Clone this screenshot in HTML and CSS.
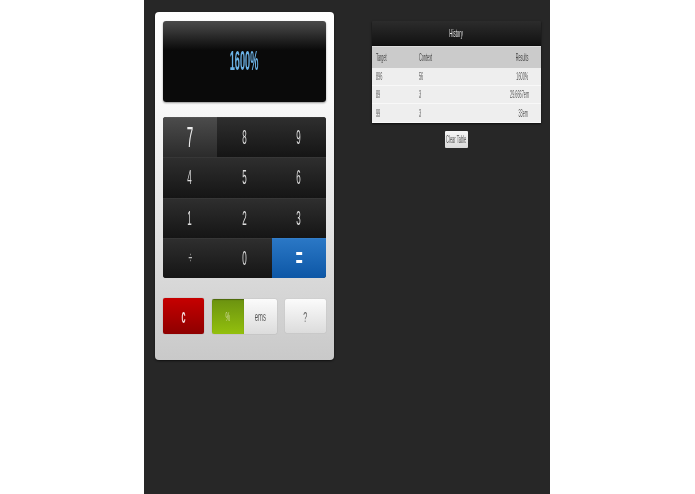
FILE: index.html
```html
<!DOCTYPE html>
<html lang="en">
<head>
<meta charset="utf-8">
<title>Pixel to Em Calculator</title>
<link rel="stylesheet" href="styles.css">
</head>
<body>
<div class="page">
  <section class="calc">
    <div class="display"><span class="sq display-text">1600%</span></div>
    <div class="keypad">
      <button class="key key-hover"><span class="sq big">7</span></button>
      <button class="key"><span class="sq">8</span></button>
      <button class="key"><span class="sq">9</span></button>
      <button class="key"><span class="sq">4</span></button>
      <button class="key"><span class="sq">5</span></button>
      <button class="key"><span class="sq">6</span></button>
      <button class="key"><span class="sq">1</span></button>
      <button class="key"><span class="sq">2</span></button>
      <button class="key"><span class="sq">3</span></button>
      <button class="key"><span class="sq div">÷</span></button>
      <button class="key"><span class="sq">0</span></button>
      <button class="key key-eq"><span class="sq eq">=</span></button>
    </div>
    <div class="controls">
      <button class="ctl clear"><span class="sq">c</span></button>
      <div class="toggle">
        <span class="tog tog-on"><span class="sq">%</span></span>
        <span class="tog tog-off"><span class="sq">ems</span></span>
      </div>
      <button class="ctl help"><span class="sq">?</span></button>
    </div>
  </section>
  <section class="history">
    <div class="hist-card">
      <div class="hist-title"><span class="sq">History</span></div>
      <table class="hist-table">
        <thead>
          <tr><th><span class="sq sl">Target</span></th><th><span class="sq sl">Context</span></th><th class="r"><span class="sq sr">Results</span></th></tr>
        </thead>
        <tbody>
          <tr><td><span class="sq sl">896</span></td><td><span class="sq sl">56</span></td><td class="r"><span class="sq sr">1600%</span></td></tr>
          <tr><td><span class="sq sl">89</span></td><td><span class="sq sl">3</span></td><td class="r"><span class="sq sr">29.6667em</span></td></tr>
          <tr><td><span class="sq sl">99</span></td><td><span class="sq sl">3</span></td><td class="r"><span class="sq sr">33em</span></td></tr>
        </tbody>
      </table>
    </div>
    <button class="clear-table"><span class="sq">Clear Table</span></button>
  </section>
</div>
</body>
</html>
```
FILE: styles.css
```css
html, body { margin: 0; padding: 0; background: #fff; height: 100%; overflow: hidden; }
body { font-family: "Liberation Sans", Arial, sans-serif; }
button { font-family: inherit; border: 0; padding: 0; margin: 0; }
.page {
  box-sizing: border-box;
  width: 406px; height: 494px; margin-left: 144px;
  background: #272727;
  display: flex; align-items: flex-start;
  padding: 12px 9px 0 11px;
  gap: 38px;
}
.sq { display: inline-block; transform: scaleX(.4); transform-origin: center; white-space: nowrap; filter: blur(.3px); }
.sl { transform-origin: left center; transform: scaleX(.38); }
.sr { transform-origin: right center; transform: scaleX(.38); }

.calc {
  box-sizing: border-box; width: 179px; height: 348px; flex: none;
  border-radius: 4px;
  background: linear-gradient(#fff 0, #f8f8f8 25%, #e4e4e4 60%, #c9c9c9 100%);
  padding: 9px 8px 0;
  box-shadow: 0 1px 2px rgba(0,0,0,.6);
}
.display {
  height: 81px; border-radius: 3px;
  background: linear-gradient(#4a4a4a 0, #3a3a3a 10%, #1c1c1c 26%, #0a0a0a 36%, #0a0a0a 100%);
  display: flex; align-items: center; justify-content: center;
  box-shadow: 0 1px 2px rgba(0,0,0,.4);
}
.display-text { color: #6cb2e6; font-size: 27px; transform: scaleX(.34); font-weight: bold; }
.keypad {
  margin-top: 15px; height: 161px; border-radius: 3px; overflow: hidden;
  display: grid; grid-template-columns: 54px 55px 54px; grid-template-rows: 40px 41px 40px 40px;
  background: #1b1b1b;
}
.key {
  background: linear-gradient(#2f2f2f, #151515);
  color: #ddd; font-size: 20px;
  display: flex; align-items: center; justify-content: center;
  box-shadow: inset 0 1px 0 rgba(255,255,255,.04);
}
.key-hover { background: linear-gradient(#4c4c4c, #2b2b2b); color: #eee; }
.big { font-size: 29px; transform: scaleX(.4); }
.div { font-size: 16px; color: #bbb; transform: scaleX(.42); }
.key-eq { background: linear-gradient(#2b78c6, #0d57a6); color: #fff; font-weight: bold; }
.eq { font-size: 28px; transform: scaleX(.42); }

.controls { display: flex; align-items: center; margin-top: 20px; justify-content: space-between; }
.ctl { height: 35px; width: 41px; border-radius: 2px; font-size: 15px; display: flex; align-items: center; justify-content: center; }
.clear { background: linear-gradient(#c60000, #8e0000); color: #f3dada; font-weight: bold; height: 36px; box-shadow: 0 0 1px rgba(0,0,0,.4); }
.clear .sq { font-size: 20px; transform: scaleX(.36); }
.help { background: linear-gradient(#fbfbfb, #dcdcdc); color: #666; box-shadow: 0 0 1px rgba(0,0,0,.25); height: 34px; }
.help .sq { transform: scaleX(.48); }
.toggle { display: flex; width: 65px; height: 35px; border-radius: 2px; overflow: hidden; box-shadow: 0 0 1px rgba(0,0,0,.35); }
.tog { display: flex; align-items: center; justify-content: center; font-size: 13px; }
.tog-on { width: 32px; background: linear-gradient(#6b9210, #93c00d); color: #d6dca8; box-shadow: inset 0 1px 1px rgba(0,0,0,.3); }
.tog-off { flex: 1; background: linear-gradient(#fbfbfb, #dcdcdc); color: #555; }
.tog-off .sq { transform: scaleX(.45); }

.history { flex: 1; display: flex; flex-direction: column; align-items: center; padding-top: 9px; }
.hist-card { width: 100%; box-shadow: 0 1px 2px rgba(0,0,0,.7); }
.hist-title {
  height: 24px; background: linear-gradient(#2c2c2c, #121212);
  border-radius: 2px 2px 0 0;
  color: #e4e4e4; font-size: 11px; display: flex; align-items: center; justify-content: center;
  border-bottom: 1px solid #0d0d0d;
}
.hist-table { width: 100%; border-collapse: separate; border-spacing: 0; table-layout: fixed; font-size: 10px; color: #555; }
.hist-table th, .hist-table td { padding: 0 0 0 4px; text-align: left; font-weight: normal; }
.hist-table th:first-child, .hist-table td:first-child { width: 39px; }
.hist-table th:nth-child(2), .hist-table td:nth-child(2) { width: 60px; }
.hist-table .r { text-align: right; padding: 0 13px 0 0; }
.hist-table th { background: #cbcbcb; height: 21px; border-top: 1px solid #ddd; color: #444; }
.hist-table td { background: #eeeeee; height: 17px; border-bottom: 1px solid #f8f8f8; }
.hist-table tbody tr:last-child td { height: 18px; }
.clear-table {
  margin-top: 8px; width: 23px; height: 17px; border-radius: 1px;
  background: linear-gradient(#f6f6f6, #dadada); color: #555; font-size: 10px;
  display: flex; align-items: center; justify-content: center;
  overflow: visible;
}
.clear-table .sq { flex: none; }
```
